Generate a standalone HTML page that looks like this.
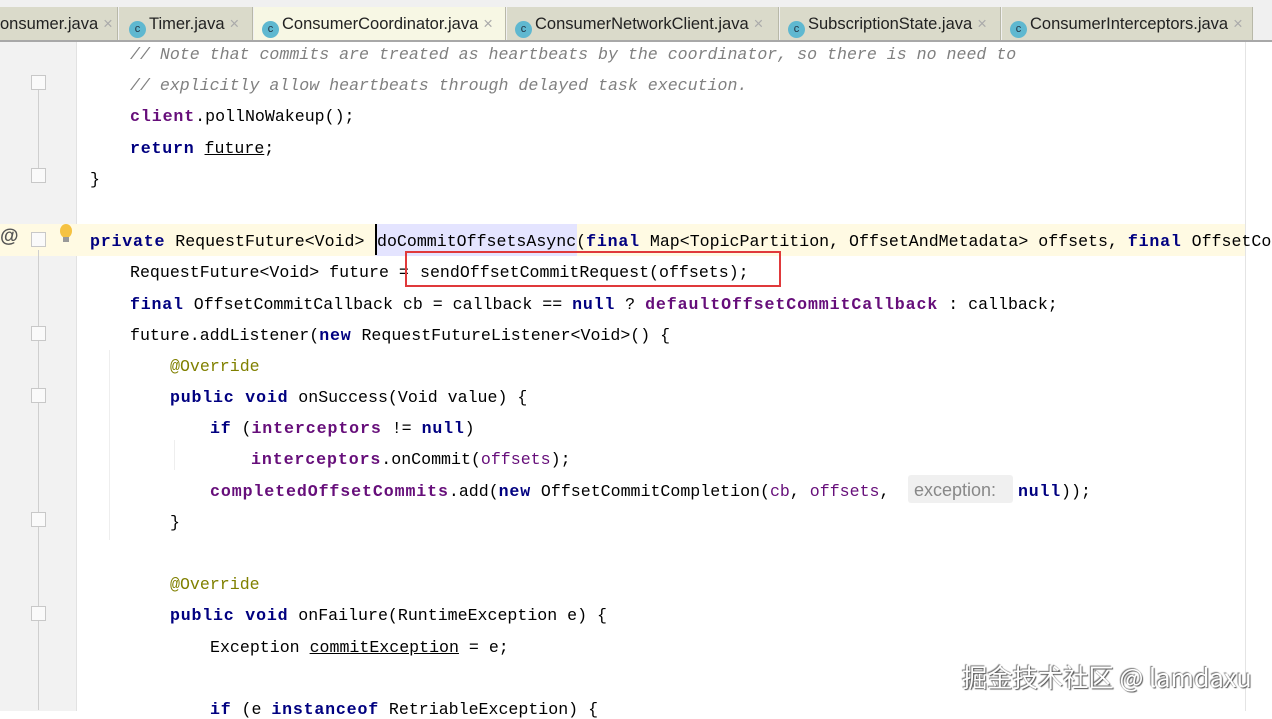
<!DOCTYPE html>
<html><head><meta charset="utf-8"><style>
*{margin:0;padding:0;box-sizing:border-box}
body{width:1272px;height:711px;overflow:hidden;background:#fff;position:relative;font-family:"Liberation Mono",monospace}
#tabs{position:absolute;left:0;top:0;width:1272px;height:42px;background:#f0f0f0;z-index:5;border-bottom:2px solid #a8a8a8;overflow:hidden}
.tab{position:absolute;top:7px;height:33px;background:#dadaca;border-right:1px solid #b8b8a8;font:16.5px "Liberation Sans",sans-serif;color:#222;line-height:34px;white-space:nowrap;overflow:hidden}
.tab.act{background:#f7f7e4}
.ic{display:inline-block;width:17px;height:17px;border-radius:50%;background:#5fb8d0;vertical-align:-3px;margin-right:3px;position:relative;font-size:11px;line-height:17px;text-align:center;color:#234}
.x{color:#aaa;margin-left:5px}
#gut{position:absolute;left:0;top:42px;width:77px;height:669px;background:#f2f2f2;border-right:1px solid #e2e2e2}
#code{position:absolute;left:0;top:39px;width:1272px;height:680px;overflow:hidden;font-size:16.6px;color:#000}
.l{height:31.2px;line-height:31.2px;white-space:pre;position:relative}
.l span.t{position:absolute;top:0}
.k{color:#000080;font-weight:bold;letter-spacing:0.8px}
.f{color:#660e7a;font-weight:bold;letter-spacing:0.9px}
.p{color:#660e7a}
.c{color:#808080;font-style:italic}
.a{color:#808000}
.u{text-decoration:underline}
.fold{position:absolute;left:31px;width:15px;height:15px;border:1px solid #c8c8c8;background:#fafafa;z-index:2}
</style></head><body>
<div id="gut"></div>
<div style="position:absolute;left:0;top:224px;width:1245px;height:32px;background:#fffae3"></div>
<div style="position:absolute;left:38px;top:90px;width:1px;height:80px;background:#cfcfcf"></div>
<div style="position:absolute;left:38px;top:250px;width:1px;height:460px;background:#cfcfcf"></div>
<div style="position:absolute;left:109px;top:350px;width:1px;height:190px;background:#eee"></div>
<div style="position:absolute;left:174px;top:440px;width:1px;height:30px;background:#eee"></div>
<div style="position:absolute;left:1245px;top:42px;width:1px;height:669px;background:#e4e4e4"></div>
<div class="fold" style="top:75px"></div>
<div class="fold" style="top:168px"></div>
<div class="fold" style="top:232px"></div>
<div class="fold" style="top:326px"></div>
<div class="fold" style="top:388px"></div>
<div class="fold" style="top:512px"></div>
<div class="fold" style="top:606px"></div>
<div style="position:absolute;left:0;top:226px;font:bold 19px 'Liberation Sans',sans-serif;color:#555">@</div>
<div style="position:absolute;left:60px;top:224px;width:12px;height:14px;border-radius:50%;background:#f5c242"></div>
<div style="position:absolute;left:63px;top:237px;width:6px;height:5px;background:#999"></div>
<div style="position:absolute;left:375px;top:224px;width:202px;height:32px;background:#e4e4ff"></div>
<div style="position:absolute;left:375px;top:224px;width:2px;height:31px;background:#000"></div>
<div style="position:absolute;left:908px;top:475px;width:105px;height:28px;background:#f0f0f0;border-radius:3px"></div>
<div id="code">
<div class="l"><span class="t c" style="left:130px">// Note that commits are treated as heartbeats by the coordinator, so there is no need to</span></div>
<div class="l"><span class="t c" style="left:130px">// explicitly allow heartbeats through delayed task execution.</span></div>
<div class="l"><span class="t" style="left:130px"><span class="f">client</span>.pollNoWakeup();</span></div>
<div class="l"><span class="t" style="left:130px"><span class="k">return</span> <span class="u">future</span>;</span></div>
<div class="l"><span class="t" style="left:90px">}</span></div>
<div class="l"></div>
<div class="l"><span class="t" style="left:90px"><span class="k">private</span> RequestFuture&lt;Void&gt; </span><span class="t" style="left:377px">doCommitOffsetsAsync(<span class="k">final</span> Map&lt;TopicPartition, OffsetAndMetadata&gt; offsets, <span class="k">final</span> OffsetCommitCallback callback) {</span></div>
<div class="l"><span class="t" style="left:130px">RequestFuture&lt;Void&gt; future = </span><span class="t" style="left:420px">sendOffsetCommitRequest(offsets);</span></div>
<div class="l"><span class="t" style="left:130px"><span class="k">final</span> OffsetCommitCallback cb = callback == <span class="k">null</span> ? <span class="f">defaultOffsetCommitCallback</span> : callback;</span></div>
<div class="l"><span class="t" style="left:130px">future.addListener(<span class="k">new</span> RequestFutureListener&lt;Void&gt;() {</span></div>
<div class="l"><span class="t a" style="left:170px">@Override</span></div>
<div class="l"><span class="t" style="left:170px"><span class="k">public void</span> onSuccess(Void value) {</span></div>
<div class="l"><span class="t" style="left:210px"><span class="k">if</span> (<span class="f">interceptors</span> != <span class="k">null</span>)</span></div>
<div class="l"><span class="t" style="left:251px"><span class="f">interceptors</span>.onCommit(<span class="p">offsets</span>);</span></div>
<div class="l"><span class="t" style="left:210px"><span class="f">completedOffsetCommits</span>.add(<span class="k">new</span> OffsetCommitCompletion(<span class="p">cb</span>, <span class="p">offsets</span>,</span><span class="t" style="left:914px;font:18px 'Liberation Sans',sans-serif;color:#888;line-height:29px">exception:</span><span class="t" style="left:1018px"><span class="k">null</span>));</span></div>
<div class="l"><span class="t" style="left:170px">}</span></div>
<div class="l"></div>
<div class="l"><span class="t a" style="left:170px">@Override</span></div>
<div class="l"><span class="t" style="left:170px"><span class="k">public void</span> onFailure(RuntimeException e) {</span></div>
<div class="l"><span class="t" style="left:210px">Exception <span class="u">commitException</span> = e;</span></div>
<div class="l"></div>
<div class="l"><span class="t" style="left:210px"><span class="k">if</span> (e <span class="k">instanceof</span> RetriableException) {</span></div>
</div>
<div style="position:absolute;left:405px;top:251px;width:376px;height:36px;border:2px solid #e0393b"></div>
<div style="position:absolute;left:962px;top:659px;font:25.3px 'Noto Sans CJK SC',sans-serif;color:#fff;text-shadow:1px 1px 1px #555,-1px -1px 1px #777;white-space:nowrap">掘金技术社区 @ lamdaxu</div>
<div id="tabs">
<div class="tab" style="left:0;width:118px;padding-left:0">onsumer.java<span class="x">×</span></div>
<div class="tab" style="left:119px;width:134px;padding-left:10px"><span class="ic">c</span>Timer.java<span class="x">×</span></div>
<div class="tab act" style="left:254px;width:252px;padding-left:8px"><span class="ic">c</span>ConsumerCoordinator.java<span class="x">×</span></div>
<div class="tab" style="left:507px;width:272px;padding-left:8px"><span class="ic">c</span>ConsumerNetworkClient.java<span class="x">×</span></div>
<div class="tab" style="left:780px;width:221px;padding-left:8px"><span class="ic">c</span>SubscriptionState.java<span class="x">×</span></div>
<div class="tab" style="left:1002px;width:251px;padding-left:8px"><span class="ic">c</span>ConsumerInterceptors.java<span class="x">×</span></div>
</div>
</body></html>
